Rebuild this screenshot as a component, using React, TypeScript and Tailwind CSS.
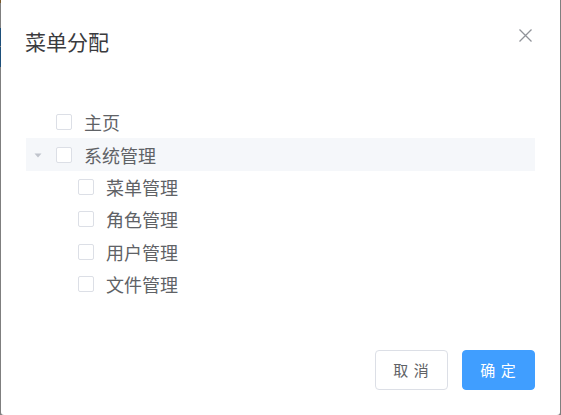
import React from "react";

type TreeNode = { id: string; label: string; children?: TreeNode[] };

const treeData: TreeNode[] = [
  { id: "home", label: "主页" },
  {
    id: "system",
    label: "系统管理",
    children: [
      { id: "menu", label: "菜单管理" },
      { id: "role", label: "角色管理" },
      { id: "user", label: "用户管理" },
      { id: "file", label: "文件管理" },
    ],
  },
];

const font = { fontFamily: '"Noto Sans CJK SC", "Noto Sans", sans-serif' };

function TreeRow({ node, level, active }: { node: TreeNode; level: number; active?: boolean }) {
  return (
    <div
      className={`flex h-[32.4px] items-center ${active ? "bg-[#f5f7fa]" : ""}`}
      style={{ paddingLeft: level * 22 }}
    >
      <span className="flex h-full w-[24px] shrink-0 items-center justify-center">
        {node.children && (
          <svg width="8" height="5" viewBox="0 0 8 5" className="mt-[1px]">
            <path d="M0.5 0.5 L7.5 0.5 L4 4.5 Z" fill="#c0c4cc" />
          </svg>
        )}
      </span>
      <span className="ml-[6px] h-[16px] w-[16px] shrink-0 rounded-[2px] border border-[#dcdfe6] bg-white" />
      <span className="ml-[12px] text-[18px] leading-none text-[#606266]">{node.label}</span>
    </div>
  );
}

export default function App() {
  return (
    <div className="flex h-[415px] w-[561px] overflow-hidden bg-[#7f7f7f]" style={font}>
      {/* bits of the page behind the overlay */}
      <div className="flex w-[1px] shrink-0 flex-col">
        <div className="h-[3px] bg-[#7a5a2a]" />
        <div className="h-[25px]" />
        <div className="h-[18px] bg-[#1d4f7a]" />
        <div className="h-[1px]" />
        <div className="h-[20px] bg-[#1d4f7a]" />
      </div>

      <div className="flex h-[415px] w-[559px] shrink-0 flex-col rounded-b-[3px] bg-white">
        {/* header */}
        <div className="flex items-start justify-between pl-[24px] pr-[28px] pt-[27px]">
          <span className="text-[21px] leading-[28px] text-[#3a3b3e]">菜单分配</span>
          <svg width="13" height="13" viewBox="0 0 13 13" className="mt-[2px]">
            <path d="M0.5 0.5 L12.5 12.5 M12.5 0.5 L0.5 12.5" stroke="#909399" strokeWidth="1.3" />
          </svg>
        </div>

        {/* tree */}
        <div className="mt-[51px] px-[25px]">
          {treeData.map((node) => (
            <div key={node.id}>
              <TreeRow node={node} level={0} active={!!node.children} />
              {node.children?.map((child) => (
                <TreeRow key={child.id} node={child} level={1} />
              ))}
            </div>
          ))}
        </div>

        {/* footer */}
        <div className="mt-auto flex justify-end gap-[14px] pl-[24px] pr-[25px] pb-[25px]">
          <button className="flex h-[40px] w-[73px] items-center justify-center rounded-[4px] border border-[#dcdfe6] bg-white text-[15px] tracking-[1px] text-[#606266]">
            取 消
          </button>
          <button className="flex h-[40px] w-[73px] items-center justify-center rounded-[4px] border border-[#409eff] bg-[#409eff] text-[15px] tracking-[1px] text-white">
            确 定
          </button>
        </div>
      </div>

      <div className="w-[1px] shrink-0" />
    </div>
  );
}
